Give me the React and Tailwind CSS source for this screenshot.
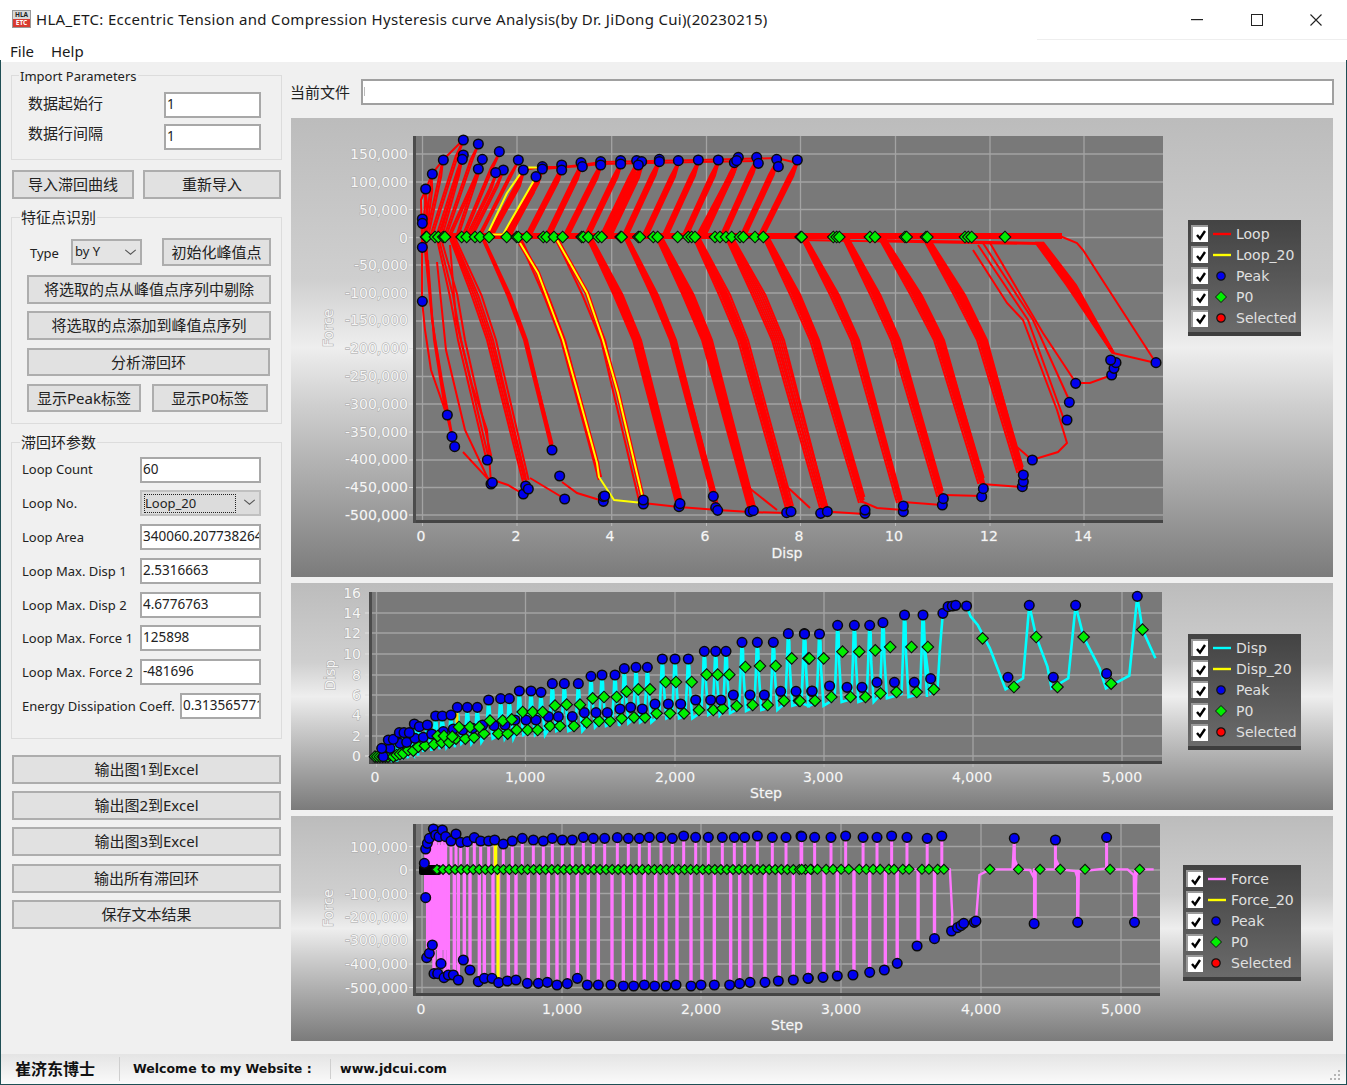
import React from 'react';

const UI = "[font-family:Noto_Sans,Noto_Sans_CJK_SC,sans-serif]";
const CHART = "[font-family:DejaVu_Sans,Noto_Sans_CJK_SC,sans-serif]";

// converters from reference crop coordinates to page coordinates
const conv = (ox, oy, sx = 3) => (list) => list.map(([x, y]) => [x / sx + ox, y / 3 + oy]);
const line = (pts) => pts.map((p) => p.join(',')).join(' ');

function Blue({ pts, r = 4.8 }) {
  return pts.map(([x, y], i) => <circle key={i} cx={x} cy={y} r={r} fill="#0000ee" stroke="#0a0a0a" strokeWidth="1.5" />);
}
function Green({ pts, s = 5.8 }) {
  return pts.map(([x, y], i) => (
    <polygon key={i} points={`${x - s},${y} ${x},${y - s} ${x + s},${y} ${x},${y + s}`} fill="#00ee00" stroke="#0d0d0d" strokeWidth="1.1" />
  ));
}

function Plot({ x, y, w, h, xt, yt }) {
  return (
    <g>
      <rect x={x} y={y} width={w} height={h} fill="#797979" />
      {xt.map((t) => <line key={t} x1={t} x2={t} y1={y} y2={y + h} stroke="#a3a3a3" strokeWidth="1.3" />)}
      {yt.map((t) => <line key={t} x1={x} x2={x + w} y1={t} y2={t} stroke="#a3a3a3" strokeWidth="1.3" />)}
      <rect x={x - 2} y={y} width="3" height={h + 3} fill="#4c4c4c" />
      <rect x={x + 1} y={y + h} width={w - 1} height="3" fill="#454545" />
      {xt.map((t) => <line key={t} x1={t} x2={t} y1={y + h + 3} y2={y + h + 6} stroke="#bbbbbb" strokeWidth="1" />)}
      {yt.map((t) => <line key={t} x1={x - 6} x2={x - 2} y1={t} y2={t} stroke="#e0e0e0" strokeWidth="1" />)}
    </g>
  );
}

function Labels({ xl, yl, yRight, xY }) {
  return (
    <g className={`${CHART} text-[14px] fill-[#f6f6f6] stroke-[#a8a8a8] stroke-[1px] [paint-order:stroke]`}>
      {xl.map(([t, s]) => <text key={s} x={t} y={xY} textAnchor="middle">{s}</text>)}
      {yl.map(([t, s]) => <text key={s} x={yRight} y={t + 5} textAnchor="end">{s}</text>)}
    </g>
  );
}

function AxisTitles({ xt, yt }) {
  return (
    <g className={`${CHART} text-[14px] fill-[#f6f6f6] stroke-[#a8a8a8] stroke-[1px] [paint-order:stroke]`}>
      <text x={xt[0]} y={xt[1]} textAnchor="middle">{xt[2]}</text>
      <text transform={`translate(${yt[0]},${yt[1]}) rotate(-90)`} textAnchor="middle">{yt[2]}</text>
    </g>
  );
}

/* ---------- chart 1 data ---------- */
const Z5 = conv(290, 120);
const Z6 = conv(290, 340);
const Z7 = conv(800, 220);

const peaksTop = Z5([[520, 60], [565, 72], [628, 95], [460, 120], [520, 105], [517, 118], [577, 118], [565, 147], [685, 120], [640, 150], [617, 158], [700, 150], [738, 170], [757, 140], [757, 147], [815, 135], [815, 150], [873, 128], [877, 140], [932, 125], [932, 135], [992, 122], [992, 132], [1040, 122], [1055, 125], [1045, 135], [1108, 118], [1108, 125], [1165, 122], [1225, 120], [1285, 120], [1333, 128], [1345, 112], [1340, 122], [1400, 112], [1405, 130], [1460, 118], [1465, 140], [1522, 120], [407, 207], [427, 162], [397, 297], [397, 310], [397, 382], [397, 544]]);
const peaksLow = [
  ...Z6([[472, 225], [486, 290], [494, 320], [592, 360], [603, 432], [607, 428], [700, 462], [707, 438], [715, 447], [786, 330], [809, 408], [824, 477], [940, 484], [940, 470], [944, 468], [1060, 492], [1060, 480], [1167, 500], [1170, 491], [1270, 469], [1277, 503], [1283, 511], [1380, 515], [1390, 512], [1490, 518], [1503, 515]]),
  ...Z7([[62, 880], [82, 875], [195, 880], [195, 870], [310, 875], [310, 858], [427, 855], [430, 836], [545, 830], [550, 806], [667, 800], [670, 785], [670, 765], [697, 720], [801, 600], [808, 547], [827, 490], [935, 465], [942, 445], [948, 428], [932, 420], [1068, 428]]),
];
const p0A = [408, 410, 435, 445, 460, 465, 515, 530, 555, 570, 597, 650, 680, 685, 710, 760, 770, 792, 818, 875, 880, 895, 925, 935, 992, 995, 1045, 1050, 1090, 1103, 1163, 1195, 1205, 1215, 1275, 1290, 1308, 1325, 1350, 1360, 1395, 1420, 1532].map((x) => [x / 3 + 290, 237]);
const p0B = [5, 100, 110, 118, 210, 225, 315, 320, 378, 382, 495, 505, 515, 615].map((x) => [x / 3 + 800, 237]);

const upBundles = [
  [422, 426, 189], [424, 432, 174], [426, 443, 160], [430, 463, 140], [436, 463, 155], [440, 462, 159], [444, 478, 144], [448, 478, 169], [456, 482, 159], [462, 499, 152], [466, 496, 173], [470, 503, 170], [478, 518, 160], [487, 523, 170], [503, 536, 177], [505, 542, 167], [525, 562, 165], [545, 581, 163], [563, 601, 162], [584, 621, 161], [600, 637, 161], [606, 642, 162], [622, 659, 159], [642, 678, 161], [662, 698, 160], [682, 718, 160], [696, 737, 161], [700, 738, 157], [720, 757, 157], [740, 777, 159], [758, 797, 160],
];
const downBundles = [
  [437, 458, 487, 462, [0, 3, 7]],
  [452, 490, 525, 483, [-3, -1, 1, 3, 6]],
  [483, 525, 552, 450, [-1, 0, 1, 2]],
  [520, 563, 600, 480, [-2, 2]],
  [557, 603, 640, 500, [-2, 2]],
  [590, 637, 679, 505, [-4, -3, -2, -1, 0, 1, 2, 3, 4]],
  [627, 673, 716, 505, [-3, -2, -1, 0, 1, 2, 3]],
  [660, 707, 752, 510, [-5, -4, -3, -2, -1, 0, 1, 2, 3, 4, 5]],
  [697, 743, 790, 512, [-5, -3, -2, -1, 0, 1, 2, 3, 5]],
  [730, 778, 825, 513, [-6, -4, -2, 0, 2, 4, 6]],
  [767, 815, 862, 503, [-5, -3, -2, -1, 0, 1, 2, 3, 4]],
  [805, 856, 900, 503, [-5, -3, -2, -1, 0, 1, 2, 3]],
  [847, 897, 941, 497, [-6, -4, -3, -2, -1, 0, 1, 2, 3]],
  [883, 940, 982, 484, [-6, -4, -3, -2, -1, 0, 1, 2, 3, 4]],
  [927, 983, 1021, 473, [-6, -4, -3, -2, -1, 0, 1, 2, 3, 4]],
];
const redExtras = [
  [[422, 237], [422, 300], [425, 330], [431, 370], [447, 416], [455, 450]],
  [[424, 240], [430, 300], [435, 340], [447, 416]],
  [[426, 240], [432, 320], [442, 380], [455, 450]],
  [[428, 260], [434, 340], [446, 416]],
  [[437, 262], [446, 350], [465, 430], [490, 483]],
  [[450, 245], [456, 320], [472, 385], [487, 430], [491, 482]],
  [[422, 237], [421, 200], [426, 189], [432, 174], [443, 160], [463, 140]],
  [[463, 452], [487, 478], [508, 485], [523, 494]],
  [[530, 478], [550, 490], [565, 499]],
  [[562, 482], [577, 493], [603, 501]],
  [[643, 503], [679, 507], [718, 510], [750, 512], [787, 513]],
  [[748, 487], [777, 510]],
  [[783, 483], [810, 508]],
  [[833, 512], [865, 514]],
  [[863, 502], [877, 508], [903, 510]],
  [[903, 502], [942, 505]],
  [[945, 495], [982, 496]],
  [[982, 484], [1022, 487]],
  [[1017, 447], [1032, 460], [1058, 452], [1067, 443], [1057, 410], [1023, 320], [1007, 303], [973, 250]],
  [[983, 243], [1033, 320], [1070, 402]],
  [[990, 243], [1043, 333], [1076, 383]],
  [[978, 245], [1028, 320], [1066, 425]],
  [[1076, 383], [1090, 383], [1112, 375]],
  [[1113, 353], [1156, 363]],
  [[800, 235], [1060, 236], [1077, 243], [1083, 250], [1156, 363]],
  [[800, 240], [1040, 244]],
  [[870, 240], [1040, 243]],
  [[523, 170], [542, 167], [562, 167], [581, 165], [601, 162], [698, 160], [777, 158], [797, 163]],
  [[542, 169], [581, 166], [601, 164], [698, 162], [757, 161]],
];

function Chart1() {
  const lines = [];
  upBundles.forEach(([x0, px, py]) => {
    const offs = x0 < 480 ? [0, 2] : [0, 1.6, 3.2, 4.8];
    offs.forEach((o) => lines.push([[x0 + o, 237], [x0 + o + (px - x0) * 0.78, py + 16], [px - 1 + o / 3, py + 3]]));
  });
  downBundles.forEach(([x0, x1, xb, yb, off]) => {
    off.forEach((o, j) => lines.push([[x0 + o * 0.6, 239], [x0 + (x1 - x0) * 0.6 + o * 1.1, 295], [x1 + o, 340], [xb + o * 0.6, yb - (j % 3) * 3]]));
  });
  for (let o = -3; o <= 5; o += 1) lines.push([[1038 + o, 242], [1070 + o * 1.2, 285], [1113 + o * 0.2, 353]]);
  return (
    <svg className="absolute left-0 top-0 w-[1042px] h-[459px]" viewBox="291 118 1042 459">
      <Plot x={415} y={136} w={748} h={384}
        xt={[422.5, 517, 611.7, 706.5, 800.5, 895.5, 990, 1084]}
        yt={[154, 182, 209.5, 237.5, 265, 293, 321, 348.5, 376.5, 404, 432, 460, 487.5, 515]} />
      <rect x="422" y="233" width="640" height="6" fill="#ff0000" />
      {lines.map((l, i) => <polyline key={i} points={line(l)} fill="none" stroke="#ff0000" strokeWidth="2" />)}
      {redExtras.map((l, i) => <polyline key={i} points={line(l)} fill="none" stroke="#ff0000" strokeWidth="2" />)}
      <g fill="none" strokeLinejoin="round">
        <polyline stroke="#ff0000" strokeWidth="4.5" points="520,243 538,273 563,340 577,390 597,463 599,477" />
        <polyline stroke="#ff0000" strokeWidth="4.5" points="557,240 587,293 603,340 618,393 642,495" />
        <polyline stroke="#ffff00" strokeWidth="2" points="487,235 507,193 523,170 529,167.5 537,167.5" />
        <polyline stroke="#ffff00" strokeWidth="2" points="487,234.5 503,234.5 510,222 536,177" />
        <polyline stroke="#ffff00" strokeWidth="2" points="520,243 538,273 563,340 577,390 597,463 599,477 614,500 643,503" />
        <polyline stroke="#ffff00" strokeWidth="2" points="557,240 587,293 603,340 618,393 642,495" />
      </g>
      <Blue pts={peaksTop} />
      <Blue pts={peaksLow} />
      <Green pts={p0A} />
      <Green pts={p0B} />
      <Labels xY={541} yRight={408}
        xl={[[421, '0'], [516, '2'], [610, '4'], [705, '6'], [799, '8'], [894, '10'], [989, '12'], [1083, '14']]}
        yl={[[154, '150,000'], [182, '100,000'], [209.5, '50,000'], [237.5, '0'], [265, '-50,000'], [293, '-100,000'], [320, '-150,000'], [348, '-200,000'], [376, '-250,000'], [404, '-300,000'], [432, '-350,000'], [459, '-400,000'], [487, '-450,000'], [515, '-500,000']]} />
      <AxisTitles xt={[787, 558, 'Disp']} yt={[333, 328, 'Force']} />
    </svg>
  );
}

/* ---------- chart 2 data ---------- */
const Z8 = conv(290, 580);
const Z9 = conv(800, 580, 2.87);
const d2Up = [...Z8([[275, 505], [295, 480], [310, 478], [328, 458], [342, 458], [358, 458], [373, 432], [388, 440], [412, 435], [437, 408], [457, 408], [483, 405], [502, 382], [532, 382], [562, 382], [596, 360], [632, 356], [658, 356], [688, 333], [723, 333], [753, 337], [787, 311], [823, 311], [865, 311], [903, 289], [936, 285], [975, 285], [1003, 266], [1038, 262], [1072, 262], [1117, 237], [1155, 237], [1195, 237], [1243, 214], [1277, 214], [1308, 214], [1356, 187], [1402, 187], [1450, 187], [1495, 161], [1543, 161]]),
  ...Z9([[13, 162], [56, 162], [108, 136], [156, 136], [200, 136], [238, 128], [300, 105], [353, 105]])];
const d2UpEnd = Z9([[410, 100], [425, 80], [437, 78], [447, 76], [478, 78], [658, 76], [791, 76], [968, 49]]);
const d2Low = [...Z8([[280, 530], [300, 505], [330, 490], [350, 487], [375, 475], [400, 472], [425, 462], [460, 455], [490, 447], [518, 450], [548, 445], [578, 435], [612, 437], [645, 435], [675, 420], [708, 420], [738, 420], [775, 410], [805, 410], [847, 410], [883, 398], [918, 398], [952, 398], [990, 387], [1022, 382], [1057, 387], [1095, 372], [1135, 372], [1172, 372], [1217, 360], [1262, 360], [1293, 360], [1330, 345], [1380, 345], [1423, 345], [1472, 334], [1518, 334], [1565, 334]]),
  ...Z9([[35, 333], [85, 318], [135, 322], [178, 322], [221, 307], [271, 307], [328, 307], [375, 296], [597, 292], [727, 292], [880, 281]])];
const g2Up = [...Z8([[443, 468], [462, 468], [487, 470], [507, 441], [540, 441], [568, 441], [600, 422], [638, 422], [665, 418], [698, 396], [728, 396], [758, 396], [795, 377], [830, 374], [870, 374], [908, 355], [942, 351], [980, 351], [1010, 335], [1045, 328], [1080, 328], [1127, 306], [1158, 306], [1205, 306], [1250, 284], [1283, 284], [1318, 284], [1366, 261], [1410, 258], [1457, 258], [1505, 235], [1555, 235]]),
  ...Z9([[27, 235], [68, 235], [122, 215], [170, 215], [216, 211], [259, 201], [320, 201], [367, 201], [524, 175], [678, 171], [814, 171], [983, 149]])];
const g2Low = [...Z8([[255, 530], [262, 530], [270, 530], [278, 530], [286, 530], [294, 530], [300, 525], [310, 530], [320, 525], [330, 522], [340, 520], [355, 510], [370, 512], [385, 500], [405, 497], [432, 493], [455, 487], [478, 487], [498, 476], [526, 476], [552, 472], [582, 461], [625, 461], [653, 461], [680, 450], [713, 450], [743, 450], [780, 438], [810, 438], [852, 438], [890, 427], [927, 423], [960, 423], [995, 415], [1032, 412], [1065, 412], [1100, 400], [1140, 400], [1182, 400], [1227, 390], [1270, 390], [1298, 385], [1340, 378], [1388, 375], [1433, 375], [1482, 362], [1527, 362]]),
  ...Z9([[0, 363], [43, 362], [90, 351], [145, 351], [188, 351], [231, 340], [277, 336], [335, 336], [384, 328], [614, 321], [739, 321], [893, 311]])];
const cyanEnd = Z9([[353, 105], [358, 200], [370, 300], [375, 340], [395, 320], [402, 200], [410, 100], [420, 85], [447, 76], [478, 78], [490, 110], [510, 135], [545, 205], [590, 328], [640, 295], [658, 76], [678, 171], [710, 260], [722, 325], [770, 295], [791, 76], [814, 171], [860, 265], [878, 325], [945, 287], [968, 49], [983, 149], [1020, 235]]);

function Chart2() {
  const cyan = [];
  d2Up.forEach(([x, y]) => {
    let best = g2Low[0];
    g2Low.forEach((g) => { if (Math.abs(g[0] - x) < Math.abs(best[0] - x)) best = g; });
    cyan.push([x - 3, best[1] + 2], [x - 1.5, (y + best[1]) / 2], [x - 0.5, y], [x + 1, y + 8], [x + 1.5, (y + best[1]) / 2], [x + 4, best[1] + 5]);
  });
  return (
    <svg className="absolute left-0 top-0 w-[1042px] h-[227px]" viewBox="291 583 1042 227">
      <Plot x={371} y={592} w={791} h={169}
        xt={[376.5, 525.5, 675, 824, 973, 1122]}
        yt={[613, 633, 654, 675, 695, 715, 736, 756]} />
      <polyline points={line(cyan)} fill="none" stroke="#00ffff" strokeWidth="2.6" />
      <polyline points={line(cyanEnd)} fill="none" stroke="#00ffff" strokeWidth="2.6" />
      <line x1="457" x2="457" y1="713" y2="723" stroke="#ffd400" strokeWidth="3" />
      <Green pts={g2Low} />
      <Blue pts={d2Low} />
      <Blue pts={d2Up} />
      <Blue pts={d2UpEnd} />
      <Green pts={g2Up} />
      <Labels xY={782} yRight={361}
        xl={[[375, '0'], [525, '1,000'], [675, '2,000'], [823, '3,000'], [972, '4,000'], [1122, '5,000']]}
        yl={[[593, '16'], [613, '14'], [633, '12'], [654, '10'], [675, '8'], [695, '6'], [715, '4'], [736, '2'], [756, '0']]} />
      <AxisTitles xt={[766, 798, 'Step']} yt={[335, 675, 'Disp']} />
    </svg>
  );
}

/* ---------- chart 3 data ---------- */
const Z10 = conv(290, 815);
const Z11 = conv(800, 815, 2.87);
const f3Up = [...Z10([[403, 145], [407, 102], [412, 85], [418, 70], [430, 42], [437, 60], [447, 65], [457, 45], [467, 65], [483, 78], [498, 57], [512, 82], [532, 80], [553, 68], [572, 78], [596, 78], [614, 75], [640, 87], [667, 78], [697, 70], [730, 75], [760, 78], [787, 70], [817, 75], [847, 75], [880, 67], [910, 70], [944, 70], [982, 68], [1015, 70], [1048, 70], [1078, 67], [1113, 67], [1147, 70], [1181, 63], [1217, 67], [1255, 67], [1297, 67], [1333, 67], [1364, 67], [1402, 63], [1447, 67], [1488, 67], [1533, 63]]),
  ...Z11([[5, 65], [42, 67], [89, 67], [131, 63], [181, 67], [221, 67], [263, 63], [307, 67], [365, 70], [407, 63], [615, 70], [733, 75], [880, 67]])];
const f3Low = [...Z10([[407, 248], [410, 428], [418, 415], [427, 390], [432, 476], [443, 476], [453, 446], [462, 488], [475, 480], [490, 480], [505, 495], [520, 435], [540, 465], [565, 500], [583, 490], [606, 490], [626, 503], [652, 498], [678, 495], [712, 505], [745, 505], [772, 502], [801, 510], [832, 506], [862, 490], [892, 510], [925, 510], [963, 510], [1000, 513], [1031, 513], [1063, 510], [1094, 513], [1128, 513], [1158, 510], [1203, 513], [1233, 510], [1273, 510], [1319, 510], [1349, 506], [1380, 502], [1425, 502], [1465, 498], [1510, 495], [1555, 490]]),
  ...Z11([[23, 490], [66, 487], [107, 483], [152, 480], [200, 472], [242, 465], [279, 445], [336, 393], [386, 371], [672, 326], [797, 322], [960, 322]])];
const f3Tail = Z11([[435, 348], [452, 338], [462, 332], [470, 325], [500, 322], [505, 318]]);
const pinkEnd = Z11([[-10, 163], [430, 163], [437, 300], [435, 348]]);
const pinkEnd2 = Z11([[505, 318], [515, 180], [545, 163], [610, 163], [615, 70], [615, 130], [627, 163], [660, 165], [672, 190], [672, 326], [672, 163], [733, 163], [733, 75], [733, 130], [747, 163], [790, 168], [797, 190], [797, 322], [800, 170], [880, 160], [880, 67], [880, 150], [890, 163], [940, 163], [958, 180], [960, 322], [965, 180], [975, 163], [1015, 163]]);
const g3 = [
  ...Array.from({ length: 63 }, (_, i) => [437 + i * 6.04, 869.5]),
  ...Z11([[5, 163], [30, 163], [50, 163], [75, 163], [95, 163], [118, 163], [140, 163], [170, 163], [190, 163], [210, 163], [230, 163], [255, 163], [270, 163], [295, 163], [313, 163], [350, 163], [370, 163], [395, 163], [413, 163], [545, 163], [627, 163], [689, 163], [747, 163], [818, 163], [890, 163], [975, 163]]),
];

function Chart3() {
  return (
    <svg className="absolute left-0 top-0 w-[1042px] h-[225px]" viewBox="291 816 1042 225">
      <Plot x={415} y={824} w={745} h={169}
        xt={[422, 562, 701, 841, 981, 1121]}
        yt={[846.5, 870, 893.5, 917, 940, 964, 987.5]} />
      <rect x="426" y="845" width="21" height="105" fill="#ff77ff" />
      {f3Up.map(([x, y], i) => <line key={i} x1={x} x2={x} y1={y} y2="870" stroke="#ff77ff" strokeWidth="3" />)}
      {f3Low.map(([x, y], i) => <line key={i} x1={x + (i % 2)} x2={x + (i % 2)} y1="870" y2={y} stroke="#ff77ff" strokeWidth="3.4" />)}
      <polyline points={line(pinkEnd)} fill="none" stroke="#ff77ff" strokeWidth="2.4" />
      <polyline points={line(pinkEnd2)} fill="none" stroke="#ff77ff" strokeWidth="2.4" />
      <line x1="495.5" x2="495.5" y1="845" y2="868" stroke="#ffff00" strokeWidth="3.6" />
      <line x1="498" x2="498" y1="873" y2="978" stroke="#ffff00" strokeWidth="3.2" />
      <rect x="419" y="865" width="22" height="10" rx="2" fill="#000000" />
      <Green pts={g3} s={5} />
      <Blue pts={f3Up} />
      <Blue pts={f3Low} />
      <Blue pts={f3Tail} />
      <Labels xY={1014} yRight={408}
        xl={[[421, '0'], [562, '1,000'], [701, '2,000'], [841, '3,000'], [981, '4,000'], [1121, '5,000']]}
        yl={[[846.5, '100,000'], [870, '0'], [893.5, '-100,000'], [917, '-200,000'], [940, '-300,000'], [964, '-400,000'], [987.5, '-500,000']]} />
      <AxisTitles xt={[787, 1030, 'Step']} yt={[333, 908, 'Force']} />
    </svg>
  );
}

function Legend({ pos, names, color }) {
  const rows = [
    { t: names[0], k: 'l', c: color },
    { t: names[1], k: 'l', c: '#ffff00' },
    { t: 'Peak', k: 'o', c: '#0000ee' },
    { t: 'P0', k: 'd', c: '#00ee00' },
    { t: 'Selected', k: 'o', c: '#ff0000' },
  ];
  return (
    <div className={`absolute ${pos} h-[116px] bg-gradient-to-b from-[#434343] to-[#6b6b6b] border-b-[4px] border-b-[#3e3e3e] pt-[3px] pl-[3px] ${CHART}`}>
      {rows.map((r) => (
        <div key={r.t} className="flex items-center h-[21.2px]">
          <span className="flex items-center justify-center w-[17px] h-[17px] bg-white border-t-2 border-l-2 border-[#9a9a9a]">
            <svg viewBox="0 0 12 12" className="w-[12px] h-[12px]"><path d="M2 6l3 3.5L10 2" fill="none" stroke="#000" strokeWidth="2.4" /></svg>
          </span>
          <svg viewBox="0 0 18 12" className="ml-[5px] w-[18px] h-[12px]">
            {r.k === 'l' && <line x1="0" x2="18" y1="6" y2="6" stroke={r.c} strokeWidth="2.4" />}
            {r.k === 'o' && <circle cx="8" cy="6" r="4.2" fill={r.c} stroke="#111" strokeWidth="1.2" />}
            {r.k === 'd' && <polygon points="2.5,6 8,0.5 13.5,6 8,11.5" fill={r.c} stroke="#111" strokeWidth="1" />}
          </svg>
          <span className="ml-[5px] text-[14px] leading-none text-[#e0e0e0] whitespace-nowrap">{r.t}</span>
        </div>
      ))}
    </div>
  );
}

function Btn({ pos, children }) {
  return (
    <div className={`absolute ${pos} flex items-center justify-center bg-[#e1e1e1] border-2 border-[#adadad] text-[15px] text-[#222] whitespace-nowrap`}>
      {children}
    </div>
  );
}

function Field({ pos, value }) {
  return (
    <input readOnly defaultValue={value} className={`absolute ${pos} h-[26px] bg-white border-2 border-[#a8a8a8] pl-[1px] pb-[2px] text-[13.5px] text-[#222] outline-none`} />
  );
}

function Chevron({ pos }) {
  return (
    <svg viewBox="0 0 14 8" className={`absolute ${pos} w-[13px] h-[7px]`}>
      <path d="M1 1l6 5 6-5" fill="none" stroke="#555" strokeWidth="1.2" />
    </svg>
  );
}

function Row({ top, children }) {
  return <span className={`absolute left-[22px] ${top} text-[13px] leading-[18px] text-[#222] whitespace-nowrap`}>{children}</span>;
}

const PANEL = 'bg-[linear-gradient(180deg,#bcbcbc_0%,#cfcfcf_35%,#eeeeee_50%,#d0d0d0_62%,#7b7b7b_100%)]';

export default function App() {
  return (
    <div className={`relative w-[1347px] h-[1085px] overflow-hidden bg-[#f0f0f0] ${UI}`}>
      {/* title bar */}
      <div className="absolute left-0 top-0 w-full h-[62px] bg-white" />
      <div className="absolute left-[1037px] top-[39px] w-[310px] h-px bg-[#eeeeee]" />
      <div className="absolute left-[12px] top-[10px] w-[19px] h-[18px] flex flex-col border border-[#999] text-[6.5px] font-bold leading-[8px] text-center">
        <span className="h-[8px] bg-[#d8d8d8] text-[#222]">HLA</span>
        <span className="h-[8px] bg-[#d83a30] text-white">ETC</span>
      </div>
      <span className="absolute left-[36px] top-[9px] text-[15px] tracking-[0.32px] leading-[20px] text-[#1a1a1a] whitespace-nowrap">HLA_ETC: Eccentric Tension and Compression Hysteresis curve Analysis(by Dr. JiDong Cui)(20230215)</span>
      <svg className="absolute left-[1191px] top-[19px] w-[12px] h-[2px]" viewBox="0 0 12 2"><rect width="12" height="1.2" fill="#222" /></svg>
      <div className="absolute left-[1251px] top-[14px] w-[12px] h-[12px] border border-[#222]" />
      <svg className="absolute left-[1310px] top-[14px] w-[12px] h-[12px]" viewBox="0 0 12 12"><path d="M0.5 0.5l11 11M11.5 0.5l-11 11" stroke="#222" strokeWidth="1.1" /></svg>
      <span className="absolute left-[10px] top-[41px] text-[15px] leading-[20px] text-[#1a1a1a]">File</span>
      <span className="absolute left-[51px] top-[41px] text-[15px] leading-[20px] text-[#1a1a1a]">Help</span>

      {/* import parameters */}
      <div className="absolute left-[11px] top-[75px] w-[271px] h-[85px] border border-[#dcdcdc]" />
      <span className="absolute left-[19px] top-[67px] px-px bg-[#f0f0f0] text-[13px] leading-[18px] text-[#222]">Import Parameters</span>
      <span className="absolute left-[28px] top-[93px] text-[15px] leading-[20px] text-[#222]">数据起始行</span>
      <span className="absolute left-[28px] top-[123px] text-[15px] leading-[20px] text-[#222]">数据行间隔</span>
      <Field pos="left-[164px] top-[92px] w-[97px]" value="1" />
      <Field pos="left-[164px] top-[124px] w-[97px]" value="1" />
      <Btn pos="left-[12px] top-[170px] w-[122px] h-[29px]">导入滞回曲线</Btn>
      <Btn pos="left-[143px] top-[170px] w-[138px] h-[29px]">重新导入</Btn>

      {/* feature points */}
      <div className="absolute left-[11px] top-[217px] w-[271px] h-[207px] border border-[#dcdcdc]" />
      <span className="absolute left-[20px] top-[207px] px-px bg-[#f0f0f0] text-[15px] leading-[20px] text-[#222]">特征点识别</span>
      <span className="absolute left-[30px] top-[244px] text-[13px] leading-[18px] text-[#222]">Type</span>
      <div className="absolute left-[71px] top-[239px] w-[71px] h-[26px] bg-[#e4e4e4] border-2 border-[#adadad] pl-[2px] text-[13px] leading-[21px] text-[#222]">by Y</div>
      <Chevron pos="left-[124px] top-[249px]" />
      <Btn pos="left-[162px] top-[238px] w-[109px] h-[28px]">初始化峰值点</Btn>
      <Btn pos="left-[27px] top-[275px] w-[244px] h-[29px]">将选取的点从峰值点序列中剔除</Btn>
      <Btn pos="left-[27px] top-[311px] w-[244px] h-[29px]">将选取的点添加到峰值点序列</Btn>
      <Btn pos="left-[27px] top-[348px] w-[243px] h-[28px]">分析滞回环</Btn>
      <Btn pos="left-[27px] top-[384px] w-[114px] h-[28px]">显示Peak标签</Btn>
      <Btn pos="left-[152px] top-[384px] w-[116px] h-[28px]">显示P0标签</Btn>

      {/* hysteresis loop parameters */}
      <div className="absolute left-[11px] top-[442px] w-[271px] h-[297px] border border-[#dcdcdc]" />
      <span className="absolute left-[20px] top-[432px] px-px bg-[#f0f0f0] text-[15px] leading-[20px] text-[#222]">滞回环参数</span>
      <Row top="top-[460px]">Loop Count</Row>
      <Field pos="left-[140px] top-[457px] w-[121px]" value="60" />
      <Row top="top-[494px]">Loop No.</Row>
      <div className="absolute left-[140px] top-[490px] w-[121px] h-[26px] bg-[#dcdcdc] border-2 border-[#c0c0c0]">
        <div className="absolute left-[2px] top-[2px] w-[92px] h-[19px] border border-dotted border-[#222] text-[13px] leading-[17px] text-[#222]">Loop_20</div>
      </div>
      <Chevron pos="left-[243px] top-[499px]" />
      <Row top="top-[528px]">Loop Area</Row>
      <Field pos="left-[140px] top-[524px] w-[121px]" value="340060.2077382641" />
      <Row top="top-[562px]">Loop Max. Disp 1</Row>
      <Field pos="left-[140px] top-[558px] w-[121px]" value="2.5316663" />
      <Row top="top-[596px]">Loop Max. Disp 2</Row>
      <Field pos="left-[140px] top-[592px] w-[121px]" value="4.6776763" />
      <Row top="top-[629px]">Loop Max. Force 1</Row>
      <Field pos="left-[140px] top-[625px] w-[121px]" value="125898" />
      <Row top="top-[663px]">Loop Max. Force 2</Row>
      <Field pos="left-[140px] top-[659px] w-[121px]" value="-481696" />
      <Row top="top-[697px]">Energy Dissipation Coeff.</Row>
      <Field pos="left-[180px] top-[693px] w-[81px]" value="0.313565771" />

      <Btn pos="left-[12px] top-[755px] w-[269px] h-[29px]">输出图1到Excel</Btn>
      <Btn pos="left-[12px] top-[791px] w-[269px] h-[29px]">输出图2到Excel</Btn>
      <Btn pos="left-[12px] top-[827px] w-[269px] h-[29px]">输出图3到Excel</Btn>
      <Btn pos="left-[12px] top-[864px] w-[269px] h-[29px]">输出所有滞回环</Btn>
      <Btn pos="left-[12px] top-[900px] w-[269px] h-[29px]">保存文本结果</Btn>

      {/* current file */}
      <span className="absolute left-[290px] top-[82px] text-[15px] leading-[20px] text-[#222]">当前文件</span>
      <div className="absolute left-[361px] top-[79px] w-[973px] h-[26px] bg-white border-2 border-[#a0a0a0]">
        <div className="absolute left-[1px] top-[6px] w-px h-[9px] bg-[#bbbbbb]" />
      </div>

      {/* charts */}
      <div className={`absolute left-[291px] top-[118px] w-[1042px] h-[459px] ${PANEL}`}>
        <Chart1 />
      </div>
      <Legend pos="left-[1188px] top-[220px] w-[113px]" names={['Loop', 'Loop_20']} color="#ff0000" />

      <div className={`absolute left-[291px] top-[583px] w-[1042px] h-[227px] ${PANEL}`}>
        <Chart2 />
      </div>
      <Legend pos="left-[1188px] top-[634px] w-[113px]" names={['Disp', 'Disp_20']} color="#00ffff" />

      <div className={`absolute left-[291px] top-[816px] w-[1042px] h-[225px] ${PANEL}`}>
        <Chart3 />
      </div>
      <Legend pos="left-[1183px] top-[865px] w-[118px]" names={['Force', 'Force_20']} color="#ff77ff" />

      {/* status bar */}
      <div className="absolute left-0 top-[1054px] w-full h-[30px] bg-gradient-to-b from-[#e4e4e4] to-[#fafafa]">
        <span className="absolute left-[15px] top-[5px] text-[16px] leading-[20px] font-bold text-[#111]">崔济东博士</span>
        <div className="absolute left-[119px] top-[3px] w-px h-[24px] bg-[#cfcfcf]" />
        <span className={`absolute left-[133px] top-[5px] text-[12.5px] leading-[20px] font-bold text-[#111] whitespace-nowrap ${CHART}`}>Welcome to my Website :</span>
        <div className="absolute left-[330px] top-[5px] w-px h-[20px] bg-[#cfcfcf]" />
        <span className={`absolute left-[340px] top-[5px] text-[12.6px] leading-[20px] font-bold text-[#111] whitespace-nowrap ${CHART}`}>www.jdcui.com</span>
        <svg className="absolute left-[1328px] top-[14px] w-[14px] h-[14px]" viewBox="0 0 14 14" fill="#b5b5b5">
          <rect x="10" y="2" width="2" height="2" /><rect x="6" y="6" width="2" height="2" /><rect x="10" y="6" width="2" height="2" />
          <rect x="2" y="10" width="2" height="2" /><rect x="6" y="10" width="2" height="2" /><rect x="10" y="10" width="2" height="2" />
        </svg>
      </div>

      {/* window edge */}
      <div className="absolute left-0 top-[60px] w-px h-[1025px] bg-[#1f4f55]" />
      <div className="absolute left-0 bottom-0 w-full h-px bg-[#1f4f55]" />
      <div className="absolute right-0 top-[60px] w-px h-[1025px] bg-[#1f4f55]" />
    </div>
  );
}
